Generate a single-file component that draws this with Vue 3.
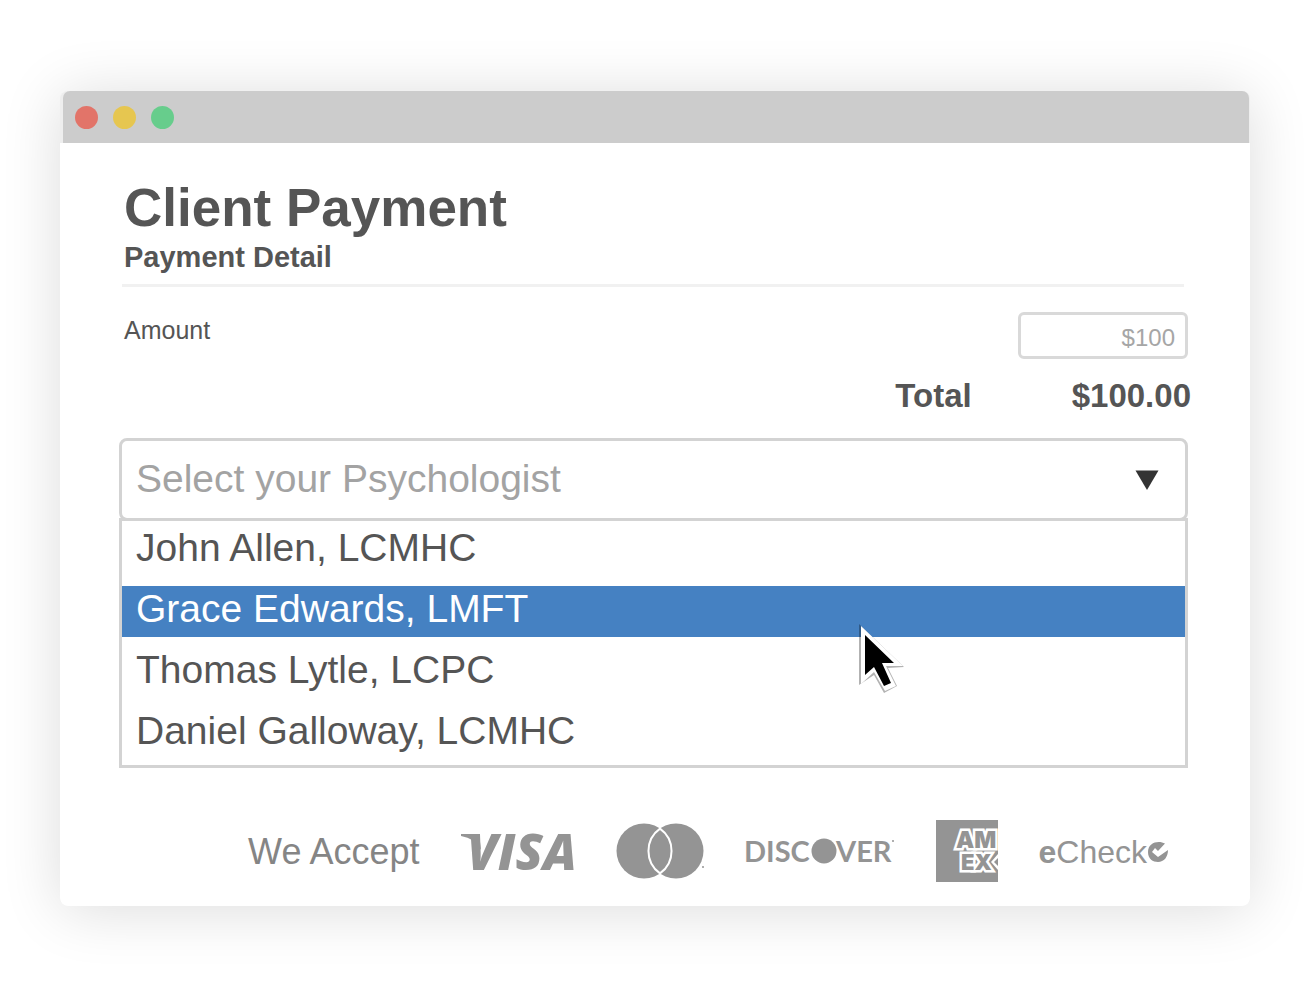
<script setup>
import { ref } from 'vue'

const psychologists = [
  'John Allen, LCMHC',
  'Grace Edwards, LMFT',
  'Thomas Lytle, LCPC',
  'Daniel Galloway, LCMHC',
]
const highlighted = ref(1)
const chosen = ref('')
</script>

<template>
  <main class="page">
    <section class="window">
      <header class="titlebar">
        <span class="dot red"></span>
        <span class="dot yellow"></span>
        <span class="dot green"></span>
      </header>

      <form class="content" @submit.prevent>
        <div class="heading">
          <h1>Client Payment</h1>
          <h2>Payment Detail</h2>
        </div>
        <hr />

        <div class="amount-row">
          <label for="amount">Amount</label>
          <input id="amount" type="text" placeholder="$100" />
        </div>

        <div class="total-row">
          <span>Total</span>
          <output for="amount">$100.00</output>
        </div>

        <div class="picker">
          <div class="select-box">
            <select v-model="chosen" aria-label="Select your Psychologist">
              <option value="">Select your Psychologist</option>
              <option v-for="name in psychologists" :key="name">{{ name }}</option>
            </select>
            <svg class="arrow" viewBox="0 0 24 20" aria-hidden="true">
              <path d="M0.500 0.500H23.500L12 20Z" fill="#333" />
            </svg>
          </div>
          <ul class="menu" role="listbox" aria-label="Psychologists">
            <li
              v-for="(name, i) in psychologists"
              :key="name"
              role="option"
              :aria-selected="i === highlighted"
              :class="{ active: i === highlighted }"
              @mouseenter="highlighted = i"
            >
              {{ name }}
            </li>
          </ul>
          <svg class="cursor" viewBox="0 0 48 70" aria-hidden="true">
            <path d="M0 0V61L15 51L25 69L38 62L29 44L45 43Z" fill="#000" opacity="0.3" />
            <path d="M2 2V60L15 48L26 67L37 62L27 42H44Z" fill="#fff" />
            <path d="M6 11V51L15 43L25 62L32 59L23 39H35Z" fill="#000" />
          </svg>
        </div>

        <footer class="accept">
          <span class="accept-label">We Accept</span>

          <svg class="visa" viewBox="0 0 114 62" role="img" aria-label="Visa">
            <path d="M0 14H18L20 30Q14 18 0 16Z" />
            <text x="6" y="50">VISA</text>
          </svg>

          <svg class="mastercard" viewBox="0 0 88 62" role="img" aria-label="Mastercard">
            <circle cx="28" cy="31" r="27.500" />
            <circle cx="60" cy="31" r="27.500" />
            <path d="M44 8.600A27.500 27.500 0 0 1 44 53.400A27.500 27.500 0 0 1 44 8.600Z" stroke="#fff" stroke-width="2" />
            <circle cx="87" cy="47" r="1" />
          </svg>

          <svg class="discover" viewBox="0 0 150 62" role="img" aria-label="Discover">
            <text x="-1" y="42">DISC</text>
            <circle cx="79" cy="31" r="12.500" />
            <text x="91" y="42">VER</text>
            <circle cx="148" cy="21" r="1" />
          </svg>

          <svg class="amex" viewBox="0 0 62 62" role="img" aria-label="American Express">
            <rect width="62" height="62" />
            <text class="am" x="20" y="28">AM</text>
            <text class="ex" x="25" y="50">EX</text>
            <path d="M55 42L62 34V50Z" fill="#fff" />
            <path d="M58 42L62 38V46Z" />
          </svg>

          <span class="echeck">
            <b>e</b>Check
            <svg viewBox="0 0 22 22" aria-hidden="true">
              <path d="M18 2.500C12 -1 1 1 1 11C1 18 6 21 11 21C17 21 21 16 21 9L11 16L5 11L8 7L11 10Z" />
            </svg>
          </span>
        </footer>
      </form>
    </section>
  </main>
</template>

<style>
body {
  margin: 0;
  background: #fff;
}
</style>

<style scoped>
.page {
  box-sizing: border-box;
  padding: 91px 62px 94px 60px;
  font-family: "Liberation Sans", Arial, sans-serif;
  color: #555;
}
.window {
  border-radius: 8px;
  background: #eee;
  box-shadow: 0 4px 60px rgba(0, 0, 0, 0.14);
}
.titlebar {
  display: flex;
  align-items: center;
  gap: 15px;
  height: 52px;
  margin: 0 1px 0 3px;
  padding-left: 12px;
  border-radius: 7px 7px 0 0;
  background: #ccc;
}
.dot {
  width: 23px;
  height: 23px;
  border-radius: 50%;
}
.red { background: #e27469; }
.yellow { background: #e6c650; }
.green { background: #67cd8c; }

.content {
  padding: 34px 62px 24px 59px;
  border-radius: 0 0 8px 8px;
  background: #fff;
}
.heading {
  padding-left: 5px;
}
h1,
h2 {
  margin: 0;
  font-weight: bold;
}
h1 {
  font-size: 53px;
  line-height: 62px;
}
h2 {
  margin-top: 2px;
  font-size: 29px;
  line-height: 32px;
}
hr {
  height: 3px;
  margin: 11px 4px 0 3px;
  border: 0;
  background: #f1f1f1;
}
.amount-row {
  display: flex;
  justify-content: space-between;
  align-items: flex-start;
  margin-top: 25px;
  padding-left: 5px;
}
.amount-row label {
  padding-top: 4px;
  font-size: 25px;
  line-height: 28px;
}
.amount-row input {
  box-sizing: border-box;
  width: 170px;
  height: 47px;
  padding: 4px 10px 0;
  border: 3px solid #d9d9d9;
  border-radius: 6px;
  background: #fff;
  font: 24px "Liberation Sans", Arial, sans-serif;
  color: #555;
  text-align: right;
}
.amount-row input::placeholder {
  color: #a6a6a6;
  opacity: 1;
}
.total-row {
  display: flex;
  justify-content: flex-end;
  gap: 100px;
  margin: 18px -3px 0 0;
  font-size: 33px;
  line-height: 38px;
  font-weight: bold;
}
.picker {
  position: relative;
  margin-top: 23px;
  font-size: 39px;
}
.select-box {
  display: grid;
  align-items: center;
}
.select-box > * {
  grid-area: 1 / 1;
}
select {
  appearance: none;
  width: 100%;
  height: 83px;
  padding: 0 60px 2px 14px;
  border: 3px solid #d3d3d3;
  border-radius: 8px;
  background: #fff;
  font: inherit;
  color: #a3a3a3;
}
.arrow {
  justify-self: end;
  width: 24px;
  height: 20px;
  margin-right: 29px;
  pointer-events: none;
}
.menu {
  display: flex;
  flex-direction: column;
  gap: 10px;
  margin: -3px 0 0;
  padding: 4px 0 6px;
  border: 3px solid #d3d3d3;
  list-style: none;
}
.menu li {
  padding: 0 14px 5px;
  line-height: 46px;
}
.menu .active {
  background: #4581c2;
  color: #fff;
}
.cursor {
  position: absolute;
  top: 186px;
  left: 69.2%;
  width: 48px;
  height: 70px;
}
.accept {
  display: flex;
  justify-content: flex-end;
  align-items: center;
  gap: 41px;
  margin-top: 52px;
  padding-right: 19px;
}
.accept svg {
  flex: none;
  fill: #949494;
}
.accept-label {
  padding-top: 2px;
  font-size: 36px;
  line-height: 40px;
  color: #858585;
  white-space: nowrap;
}
.visa {
  width: 114px;
  height: 62px;
  overflow: visible;
  font: italic 800 50px "Open Sans", sans-serif;
}
.mastercard {
  width: 88px;
  height: 62px;
}
.discover {
  width: 150px;
  height: 62px;
  font: bold 29px "Lato", sans-serif;
}
.amex {
  width: 62px;
  height: 62px;
  font-family: "Inter", sans-serif;
  font-weight: 900;
}
.amex text {
  paint-order: stroke;
  stroke: #fff;
  stroke-width: 5px;
}
.am {
  font-size: 23px;
}
.ex {
  font-size: 22px;
}
.echeck {
  display: flex;
  align-items: center;
  padding-top: 2px;
  font-size: 32px;
  line-height: 40px;
  color: #949494;
}
.echeck svg {
  width: 22px;
  height: 22px;
}
</style>
